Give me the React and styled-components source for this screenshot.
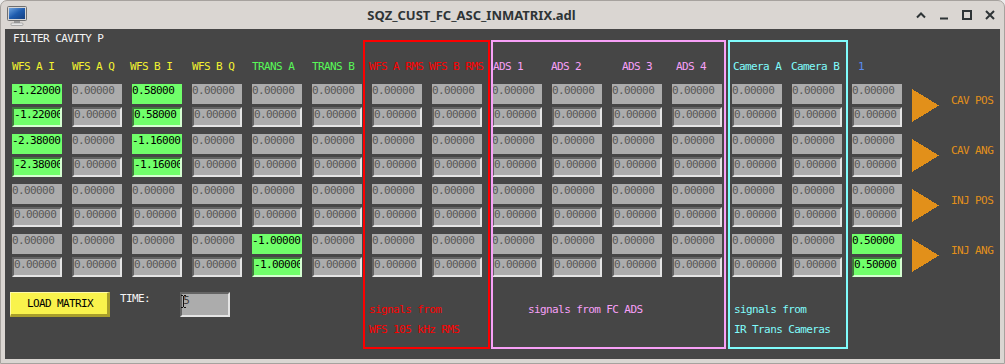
import React from 'react';
import styled, { createGlobalStyle } from 'styled-components';

const YELLOW = '#f4f430';
const GREEN_TXT = '#58f858';
const RED = '#fd0000';
const PINK = '#f8a0f8';
const CYAN = '#80fcfc';
const BLUE = '#5a8cf0';
const ORANGE = '#e2901a';
const CELL_GRAY = '#acacac';
const CELL_GREEN = '#70ff6a';

const GlobalStyle = createGlobalStyle`
  html, body {
    margin: 0;
    padding: 0;
    background: #ececec;
  }
  body {
    font-family: "DejaVu Sans Mono", "Liberation Mono", monospace;
  }
`;

const columns = [
  { label: 'WFS A I', color: YELLOW, shift: 0 },
  { label: 'WFS A Q', color: YELLOW, shift: 0 },
  { label: 'WFS B I', color: YELLOW, shift: -2 },
  { label: 'WFS B Q', color: YELLOW, shift: 0 },
  { label: 'TRANS A', color: GREEN_TXT, shift: 0 },
  { label: 'TRANS B', color: GREEN_TXT, shift: 0 },
  { label: 'WFS A RMS', color: RED, shift: -3 },
  { label: 'WFS B RMS', color: RED, shift: -3 },
  { label: 'ADS 1', color: PINK, shift: 1 },
  { label: 'ADS 2', color: PINK, shift: -1 },
  { label: 'ADS 3', color: PINK, shift: 10 },
  { label: 'ADS 4', color: PINK, shift: 4 },
  { label: 'Camera A', color: CYAN, shift: 1 },
  { label: 'Camera B', color: CYAN, shift: -1 },
  { label: '1', color: BLUE, shift: 6 },
];

const outputs = [
  { name: 'CAV POS', values: { 0: '-1.22000', 2: '0.58000' } },
  { name: 'CAV ANG', values: { 0: '-2.38000', 2: '-1.16000' } },
  { name: 'INJ POS', values: {} },
  { name: 'INJ ANG', values: { 4: '-1.00000', 14: '0.50000' } },
];

const groups = [
  { cols: '7 / 9', color: RED, ml: -9, mr: 2, pl: 4, pb: 11, lines: ['signals from', 'WFS 105 kHz RMS'] },
  { cols: '9 / 13', color: PINK, ml: -1, mr: 6, pl: 35, pb: 31, lines: ['signals from FC ADS'] },
  { cols: '13 / 15', color: CYAN, ml: -4, mr: 4, pl: 4, pb: 11, lines: ['signals from', 'IR Trans Cameras'] },
];

const App = () => {
  return (
    <>
      <GlobalStyle />
      <Window>
        <TitleBar>
          <AppIcon />
          <Title>SQZ_CUST_FC_ASC_INMATRIX.adl</Title>
          <WinControls>
            <svg width="10" height="10" viewBox="0 0 10 10">
              <polyline points="1,7.5 5,3.5 9,7.5" fill="none" stroke="#2e3436" strokeWidth="2" />
            </svg>
            <svg width="10" height="10" viewBox="0 0 10 10">
              <line x1="1" y1="8.5" x2="9" y2="8.5" stroke="#2e3436" strokeWidth="2" />
            </svg>
            <svg width="10" height="10" viewBox="0 0 10 10">
              <rect x="1" y="1" width="8" height="8" fill="none" stroke="#2e3436" strokeWidth="2" />
            </svg>
            <svg width="10" height="10" viewBox="0 0 10 10">
              <path d="M1 1 L9 9 M9 1 L1 9" stroke="#2e3436" strokeWidth="2" />
            </svg>
          </WinControls>
        </TitleBar>

        <Panel>
          <Heading>FILTER CAVITY P</Heading>

          {columns.map((c, i) => (
            <ColLabel key={c.label} $col={i + 1} $color={c.color} $shift={c.shift}>
              {c.label}
            </ColLabel>
          ))}

          {outputs.map((o, r) =>
            columns.map((c, i) => {
              const v = o.values[i];
              return (
                <Pair key={`${o.name}-${i}`} $row={4 + r * 2} $col={i + 1}>
                  <Monitor $on={!!v}>{v || '0.00000'}</Monitor>
                  <Control $on={!!v}>{v || '0.00000'}</Control>
                </Pair>
              );
            })
          )}

          {outputs.map((o, r) => (
            <Output key={o.name} $row={4 + r * 2}>
              <svg width="27" height="33" viewBox="0 0 27 33" shapeRendering="crispEdges">
                <polygon points="0,0 27,16.5 0,33" fill={ORANGE} />
              </svg>
              <OutLabel>{o.name}</OutLabel>
            </Output>
          ))}

          <Footer>
            <LoadButton>LOAD MATRIX</LoadButton>
            <TimeLabel>TIME:</TimeLabel>
            <TimeInput>
              <TimeValue>5</TimeValue>
              <Cursor width="5" height="13" viewBox="0 0 5 13">
                <path d="M0 0.5 H2 M3 0.5 H5 M2.5 1 V12 M0 12.5 H2 M3 12.5 H5" stroke="#111" strokeWidth="1" />
              </Cursor>
            </TimeInput>
          </Footer>

          {groups.map((g) => (
            <Group key={g.cols} $cols={g.cols} $color={g.color} $ml={g.ml} $mr={g.mr} $pl={g.pl} $pb={g.pb}>
              {g.lines.map((l) => (
                <GroupText key={l}>{l}</GroupText>
              ))}
            </Group>
          ))}
        </Panel>
      </Window>
    </>
  );
};

const AppIcon = () => (
  <IconBox width="20" height="20" viewBox="0 0 20 20">
    <defs>
      <linearGradient id="scr" x1="0" y1="0" x2="1" y2="1">
        <stop offset="0" stopColor="#6fa4e0" />
        <stop offset="0.5" stopColor="#1f5cae" />
        <stop offset="1" stopColor="#143f80" />
      </linearGradient>
    </defs>
    <rect x="0.5" y="0.5" width="19" height="14" rx="1" fill="#d6d6d6" stroke="#707070" />
    <rect x="2" y="2" width="16" height="11" fill="url(#scr)" />
    <rect x="7" y="15" width="6" height="2" fill="#9a9a9a" />
    <rect x="4" y="17" width="12" height="2.5" rx="1" fill="#e8e8e8" stroke="#8a8a8a" strokeWidth="0.6" />
  </IconBox>
);

const Window = styled.div`
  width: 1005px;
  height: 364px;
  box-sizing: border-box;
  border: 1px solid #a6a29e;
  border-radius: 7px 7px 0 0;
  background: #dad6d2;
  display: flex;
  flex-direction: column;
  overflow: hidden;
`;

const TitleBar = styled.div`
  height: 28px;
  display: flex;
  align-items: center;
  padding: 0 9px 0 6px;
`;

const IconBox = styled.svg`
  flex: none;
  margin-top: 1px;
`;

const Title = styled.div`
  flex: 1;
  text-align: center;
  font-family: "Noto Sans", "DejaVu Sans", sans-serif;
  font-weight: 700;
  font-size: 13px;
  color: #2e3436;
`;

const WinControls = styled.div`
  display: flex;
  align-items: center;
  gap: 13px;
`;

const Panel = styled.div`
  margin: 0 4px;
  height: 330px;
  background: #464646;
  display: grid;
  padding-left: 7px;
  grid-template-columns: repeat(15, 60px) 88px;
  grid-template-rows: 32px 12px 11px 43px 7px 43px 7px 43px 7px 43px 15px 57px 10px;
  font-size: 11px;
  letter-spacing: -0.6px;
  line-height: 12px;
  white-space: nowrap;
`;

const Heading = styled.div`
  grid-row: 1;
  grid-column: 1 / span 8;
  padding: 4px 0 0 1px;
  color: #f4f4f4;
`;

const ColLabel = styled.div`
  grid-row: 2;
  grid-column: ${(p) => p.$col};
  margin-left: ${(p) => p.$shift}px;
  color: ${(p) => p.$color};
`;

const Pair = styled.div`
  grid-row: ${(p) => p.$row};
  grid-column: ${(p) => p.$col};
  width: 50px;
  display: flex;
  flex-direction: column;
  gap: 3px;
`;

const Monitor = styled.div`
  height: 20px;
  box-sizing: border-box;
  overflow: hidden;
  line-height: 14px;
  background: ${(p) => (p.$on ? CELL_GREEN : CELL_GRAY)};
  color: ${(p) => (p.$on ? '#000' : '#585858')};
`;

const Control = styled(Monitor)`
  line-height: 12px;
  border: 2px solid;
  border-color: ${(p) =>
    p.$on ? '#3f7a3c #d4ffd0 #d4ffd0 #3f7a3c' : '#646464 #e4e4e4 #e4e4e4 #646464'};
`;

const Output = styled.div`
  grid-row: ${(p) => p.$row};
  grid-column: 16;
  display: flex;
  align-items: center;
  gap: 12px;
`;

const OutLabel = styled.span`
  color: ${ORANGE};
  margin-bottom: 9px;
`;

const Footer = styled.div`
  grid-row: 12;
  grid-column: 1 / span 6;
  display: flex;
  align-items: flex-start;
`;

const LoadButton = styled.div`
  margin-left: -2px;
  width: 100px;
  height: 25px;
  box-sizing: border-box;
  border-style: solid;
  border-width: 1px 3px 3px 1px;
  border-color: #fffaa8 #a89e2a #a89e2a #fffaa8;
  background: #f9f34c;
  color: #000;
  display: flex;
  align-items: center;
  justify-content: center;
  padding-left: 2px;
`;

const TimeLabel = styled.span`
  margin: 1px 0 0 10px;
  color: #f4f4f4;
`;

const TimeInput = styled.div`
  position: relative;
  margin-left: 30px;
  width: 50px;
  height: 25px;
  box-sizing: border-box;
  border: 2px solid;
  border-color: #646464 #e4e4e4 #e4e4e4 #646464;
  background: ${CELL_GRAY};
  line-height: 14px;
  padding-left: 1px;
`;

const TimeValue = styled.span`
  color: #404040;
`;

const Cursor = styled.svg`
  position: absolute;
  left: -1px;
  top: 1px;
`;

const Group = styled.div`
  grid-row: 2 / 13;
  grid-column: ${(p) => p.$cols};
  margin: -21px ${(p) => p.$mr}px 0 ${(p) => p.$ml}px;
  border: 2px solid ${(p) => p.$color};
  box-sizing: border-box;
  display: flex;
  flex-direction: column;
  justify-content: flex-end;
  gap: 8px;
  padding: 0 0 ${(p) => p.$pb}px ${(p) => p.$pl}px;
  color: ${(p) => p.$color};
  pointer-events: none;
`;

const GroupText = styled.span``;

export default App;
